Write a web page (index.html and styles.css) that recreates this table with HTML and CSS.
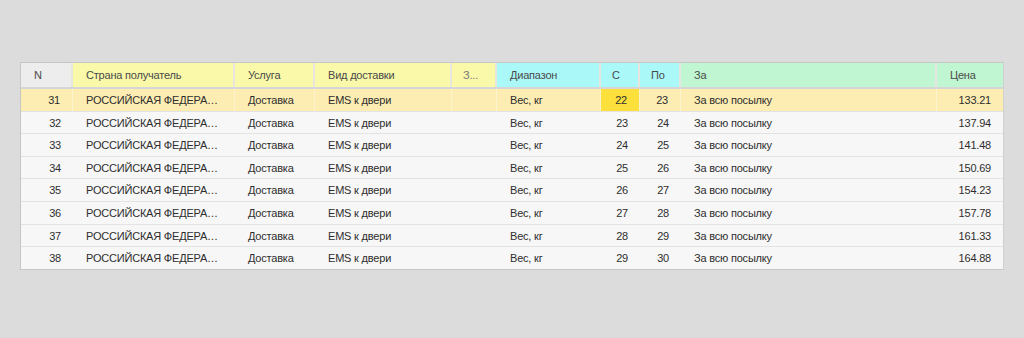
FILE: index.html
```html
<!DOCTYPE html>
<html lang="ru">
<head>
<meta charset="utf-8">
<title>Тарифы</title>
<link rel="stylesheet" href="styles.css">
</head>
<body>
<div class="page">
  <div class="grid">
    <div class="row head">
      <div class="c h-grey">N</div>
      <div class="c h-yel">Страна получатель</div>
      <div class="c h-yel">Услуга</div>
      <div class="c h-yel">Вид доставки</div>
      <div class="c h-yel dim">З...</div>
      <div class="c h-cyan">Диапазон</div>
      <div class="c h-cyan nar">С</div>
      <div class="c h-cyan nar">По</div>
      <div class="c h-green">За</div>
      <div class="c h-green last">Цена</div>
    </div>
    <div class="row sel">
      <div class="c r">31</div><div class="c">РОССИЙСКАЯ ФЕДЕРАЦИЯ</div><div class="c">Доставка</div><div class="c">EMS к двери</div><div class="c"></div><div class="c">Вес, кг</div><div class="c r cur">22</div><div class="c r">23</div><div class="c">За всю посылку</div><div class="c r last">133.21</div>
    </div>
    <div class="row">
      <div class="c r">32</div><div class="c">РОССИЙСКАЯ ФЕДЕРАЦИЯ</div><div class="c">Доставка</div><div class="c">EMS к двери</div><div class="c"></div><div class="c">Вес, кг</div><div class="c r">23</div><div class="c r">24</div><div class="c">За всю посылку</div><div class="c r last">137.94</div>
    </div>
    <div class="row">
      <div class="c r">33</div><div class="c">РОССИЙСКАЯ ФЕДЕРАЦИЯ</div><div class="c">Доставка</div><div class="c">EMS к двери</div><div class="c"></div><div class="c">Вес, кг</div><div class="c r">24</div><div class="c r">25</div><div class="c">За всю посылку</div><div class="c r last">141.48</div>
    </div>
    <div class="row">
      <div class="c r">34</div><div class="c">РОССИЙСКАЯ ФЕДЕРАЦИЯ</div><div class="c">Доставка</div><div class="c">EMS к двери</div><div class="c"></div><div class="c">Вес, кг</div><div class="c r">25</div><div class="c r">26</div><div class="c">За всю посылку</div><div class="c r last">150.69</div>
    </div>
    <div class="row">
      <div class="c r">35</div><div class="c">РОССИЙСКАЯ ФЕДЕРАЦИЯ</div><div class="c">Доставка</div><div class="c">EMS к двери</div><div class="c"></div><div class="c">Вес, кг</div><div class="c r">26</div><div class="c r">27</div><div class="c">За всю посылку</div><div class="c r last">154.23</div>
    </div>
    <div class="row">
      <div class="c r">36</div><div class="c">РОССИЙСКАЯ ФЕДЕРАЦИЯ</div><div class="c">Доставка</div><div class="c">EMS к двери</div><div class="c"></div><div class="c">Вес, кг</div><div class="c r">27</div><div class="c r">28</div><div class="c">За всю посылку</div><div class="c r last">157.78</div>
    </div>
    <div class="row">
      <div class="c r">37</div><div class="c">РОССИЙСКАЯ ФЕДЕРАЦИЯ</div><div class="c">Доставка</div><div class="c">EMS к двери</div><div class="c"></div><div class="c">Вес, кг</div><div class="c r">28</div><div class="c r">29</div><div class="c">За всю посылку</div><div class="c r last">161.33</div>
    </div>
    <div class="row">
      <div class="c r">38</div><div class="c">РОССИЙСКАЯ ФЕДЕРАЦИЯ</div><div class="c">Доставка</div><div class="c">EMS к двери</div><div class="c"></div><div class="c">Вес, кг</div><div class="c r">29</div><div class="c r">30</div><div class="c">За всю посылку</div><div class="c r last">164.88</div>
    </div>
  </div>
</div>
</body>
</html>
```

FILE: styles.css
```css
html, body {
  margin: 0;
  padding: 0;
  background: #dcdcdc;
}
.page {
  padding: 62px 21px 0 20px;
  font-family: "Liberation Sans", Arial, sans-serif;
  font-size: 11px;
  letter-spacing: -0.2px;
  color: #2e2e2e;
}
.grid {
  border: 1px solid #c6c6c6;
  border-right-color: #d0d0d0;
  background: #f7f7f7;
  width: 982px;
}
.row {
  display: grid;
  grid-template-columns: 52px 162px 80px 137px 45px 104px 39px 41px 256px 66px;
  height: 22.6px;
  line-height: 22.6px;
  border-bottom: 1px solid #e3e3e3;
  box-sizing: border-box;
}
.row:last-child {
  border-bottom: none;
  height: 21.6px;
}
.row.head {
  height: 26px;
  line-height: 25px;
  border-bottom: 2px solid #d6d6d6;
  color: #4a4a4a;
}
.c {
  display: block;
  padding: 0 12px 0 13px;
  white-space: nowrap;
  overflow: hidden;
  text-overflow: ellipsis;
  min-width: 0;
}
.c.r {
  text-align: right;
  padding: 0 12px 0 2px;
}
.head .c {
  border-right: 2px solid #e6e6de;
}
.head .c.nar {
  padding: 0 2px 0 11px;
}
.head .c.last,
.sel .c.last {
  border-right: none;
}
.head .c.dim {
  padding: 0 2px 0 11px;
  color: #777;
}
.h-grey { background: #ededed; }
.h-yel { background: #f9f9a9; }
.h-cyan { background: #aaf8f8; }
.h-green { background: #c0f6d1; }
.sel {
  background: #fdedb3;
}
.sel .c {
  border-right: 1px solid #fdf3cf;
}
.sel .c.cur {
  background: #fde03c;
}
```
